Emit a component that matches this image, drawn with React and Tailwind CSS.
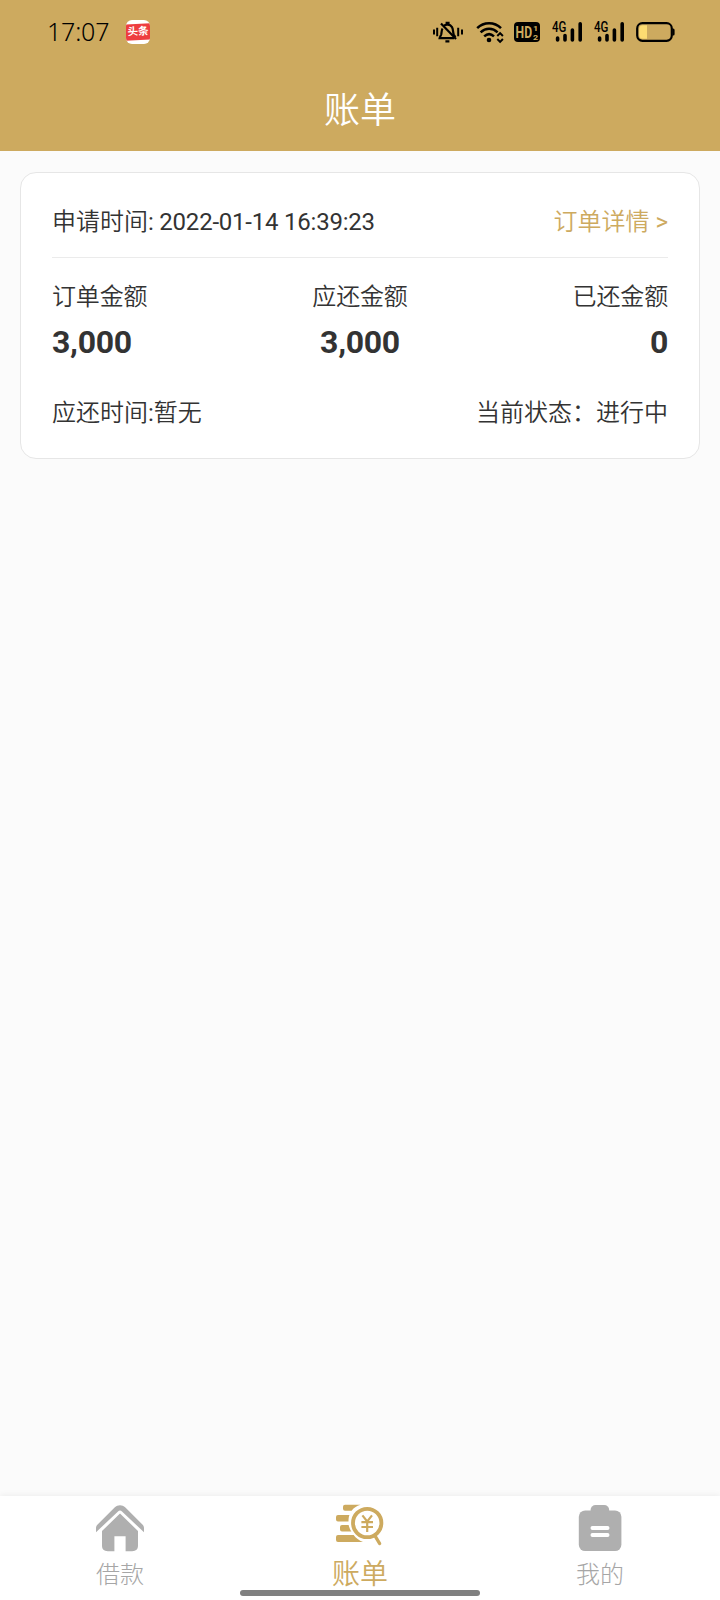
import React from 'react';

const BellOffIcon = () => (
  <svg width="32" height="24" viewBox="0 0 32 24" fill="none" stroke="#000" strokeWidth="2.2" strokeLinecap="butt">
    <path d="M10.5 8.5C9.5 10 9.6 13 9.2 14.5C8.8 15.8 7.8 16.6 7.6 18.2H22" />
    <path d="M11.5 6.4C13.4 4 18 4 20 7.2C21.4 9.4 20.8 12.6 21.8 14.8L23.4 17.2" />
    <path d="M9 3.6L24 19" />
    <path d="M13.6 2.8H17.6M13.4 21.4H17.4" strokeWidth="2.2" />
    <path d="M2 9.4V14.6M5.2 7.8V16.2M26.2 7.8V16.2M30 9.4V14.6" strokeWidth="2" />
  </svg>
);

const WifiIcon = () => (
  <svg width="28" height="24" viewBox="0 0 28 24" fill="none" stroke="#000" strokeWidth="2.5">
    <path d="M1.2 8.2C7.8 1.6 18.4 1.6 25 8.2" />
    <path d="M4.6 12.4C9.6 7.6 16.6 7.6 21.6 12.4" />
    <path d="M8.2 16.4C11.2 13.6 15 13.6 18 16.4" />
    <circle cx="13" cy="20" r="2.3" fill="#000" stroke="none" />
    <path d="M21.3 16L24.1 13.1L26.9 16M21.3 19L24.1 21.9L26.9 19" strokeWidth="2" />
  </svg>
);

const HdIcon = () => (
  <svg width="26" height="20" viewBox="0 0 26 20">
    <rect width="26" height="20" rx="4" fill="#000" />
    <g fill="#cdaa5f" fontFamily="Roboto, sans-serif" fontWeight="bold">
      <text transform="translate(1.6 15.8) scale(.76 1)" fontSize="16">HD</text>
      <text transform="translate(19 8.8) scale(1.2 1)" fontSize="7.5">1</text>
      <text transform="translate(19 18) scale(1.2 1)" fontSize="7.5">2</text>
    </g>
  </svg>
);

const SignalIcon = () => (
  <svg width="31" height="30" viewBox="0 -4 31 30">
    <text transform="translate(0 11.2) scale(.82 1)" fontSize="14" fontWeight="500" fontFamily="Roboto, sans-serif">4G</text>
    <g stroke="#000" strokeWidth="3.6" strokeLinecap="round">
      <path d="M5.6 17V19M13 14.6V19M20.4 9V19M28.2 2.8V19" />
    </g>
  </svg>
);

const BatteryIcon = () => (
  <svg width="39" height="20" viewBox="0 0 39 20">
    <rect x="1.2" y="1.2" width="34.6" height="17.6" rx="5.2" fill="none" stroke="#000" strokeWidth="2.2" />
    <path d="M11 3.2V16.8H7C4.4 16.8 3.2 15.4 3.2 13V7C3.2 4.6 4.4 3.2 7 3.2Z" fill="#fddc72" />
    <path d="M36.6 6.5H37.2Q38.6 6.5 38.6 8V12Q38.6 13.5 37.2 13.5H36.6Z" />
  </svg>
);

const HomeIcon = () => (
  <svg width="48" height="48" viewBox="0 0 48 48" fill="#afafaf">
    <path d="M0 23.2C0 21.6 .5 20.6 1.6 19.5L18.6 2.6C22 -.6 26 -.6 29.4 2.6L46.4 19.5C47.5 20.6 48 21.6 48 23.2V27.3L26 6.4Q24 4.6 22 6.4L0 27.3Z" />
    <path d="M24 8.6L42 26V40.6C42 44.4 40 46.2 36.2 46.2H29.6V31.2H18.4V46.2H11.8C8 46.2 6 44.4 6 40.6V26Z" />
  </svg>
);

const BillIcon = () => (
  <svg width="48" height="44" viewBox="0 0 48 44" fill="#cdaa5f" className="-mt-px">
    <path d="M9 .8H24.5C20.5 2 17.5 4 15.6 6.8H9Q7 6.8 7 4.8V2.8Q7 .8 9 .8Z" />
    <path d="M2 11H13.4C12.7 13 12.5 15 12.5 17.4H2Q0 17.4 0 15.4V13Q0 11 2 11Z" />
    <path d="M6 21H12.6C13.2 23.6 14.2 25.8 15.4 27.6H6Q4 27.6 4 25.6V23Q4 21 6 21Z" />
    <path d="M2 31H17.6C20 34 23 36.6 27 38H2Q0 38 0 36V33Q0 31 2 31Z" />
    <circle cx="31.2" cy="19" r="14.2" fill="none" stroke="#cdaa5f" strokeWidth="3.8" />
    <path d="M38.8 31.5L43.6 39.5" stroke="#cdaa5f" strokeWidth="3.4" strokeLinecap="round" />
    <path d="M26.4 11.4L31.2 17.4L36 11.4M31.2 17.4V28M25.4 18.2H37M25.4 23H37" fill="none" stroke="#cdaa5f" strokeWidth="2.2" />
  </svg>
);

const MineIcon = () => (
  <svg width="44" height="48" viewBox="0 0 44 48" fill="#afafaf">
    <rect x="12.6" y="0" width="18.6" height="12" rx="5" />
    <rect x="0.8" y="5.4" width="42.6" height="40.6" rx="6.4" />
    <path d="M14.4 23H29.6M14.4 30H29.6" stroke="#fff" strokeWidth="3.8" strokeLinecap="round" />
  </svg>
);

const StatusBar = () => (
  <div className="flex h-16 items-center pl-[47px] pr-[45px]">
    <span className="w-[79px] pb-0.5 font-['Noto_Sans'] text-[25px] font-light leading-none tracking-[-0.2px] text-black">17:07</span>
    <div className="flex h-6 w-6 flex-col justify-center overflow-hidden rounded-md bg-white">
      <div className="-mx-0.5 -rotate-3 bg-[#ee3d40] text-center text-[10.5px] font-bold leading-4 whitespace-nowrap text-white">头条</div>
    </div>
    <div className="ml-auto flex items-center">
      <BellOffIcon />
      <span className="ml-3"><WifiIcon /></span>
      <span className="ml-2.5"><HdIcon /></span>
      <span className="ml-3"><SignalIcon /></span>
      <span className="ml-[11px]"><SignalIcon /></span>
      <span className="ml-[11px]"><BatteryIcon /></span>
    </div>
  </div>
);

const Amount = ({ label, value, className }) => (
  <div className={`flex flex-col ${className}`}>
    <span className="text-2xl leading-9 tracking-[-0.15px]">{label}</span>
    <span className="mt-[7px] font-[Roboto] text-[32px] font-bold leading-10 tracking-[-0.3px]">{value}</span>
  </div>
);

const OrderCard = () => (
  <div className="mx-5 mt-[21px] h-[287px] rounded-2xl border border-[#e6e6e6] bg-white px-[31px] text-[#333]">
    <div className="flex h-[85px] items-center justify-between border-b border-[#ebebeb] pt-3.5 text-2xl leading-9">
      <span>申请时间<span className="font-normal tracking-[-0.22px]">: 2022-01-14 16:39:23</span></span>
      <a href="#" className="text-[#cdaa5f]">订单详情<span className="font-normal"> &gt;</span></a>
    </div>
    <div className="flex justify-between pt-[21px]">
      <Amount label="订单金额" value="3,000" className="items-start" />
      <Amount label="应还金额" value="3,000" className="items-center" />
      <Amount label="已还金额" value="0" className="items-end" />
    </div>
    <div className="mt-[33px] flex justify-between text-2xl leading-9">
      <span>应还时间<span className="font-normal">:</span>暂无</span>
      <span>当前状态：进行中</span>
    </div>
  </div>
);

const tabs = [
  { label: '借款', icon: <HomeIcon />, active: false },
  { label: '账单', icon: <BillIcon />, active: true },
  { label: '我的', icon: <MineIcon />, active: false },
];

const TabBar = () => (
  <nav className="relative flex h-[104px] bg-white shadow-[0_-1px_6px_rgba(0,0,0,0.06)]">
    {tabs.map((tab) => (
      <a key={tab.label} href="#" className="flex flex-1 flex-col items-center pt-[9px]">
        <div className="flex h-[50px] items-start">{tab.icon}</div>
        <span className={`leading-10 ${tab.active ? 'text-[28px] text-[#cdaa5f]' : 'text-2xl font-light text-[#a6a6a6]'}`}>{tab.label}</span>
      </a>
    ))}
    <div className="absolute bottom-1 left-1/2 h-1.5 w-60 -translate-x-1/2 rounded-full bg-[#808080]" />
  </nav>
);

const App = () => {
  return (
    <div className="flex h-[1600px] w-[720px] flex-col overflow-hidden bg-[#fbfbfb] font-[Roboto,'Noto_Sans_CJK_SC',sans-serif] font-[350]">
      <header className="h-[151px] bg-[#cdaa5f]">
        <StatusBar />
        <h1 className="text-center text-4xl leading-[95px] text-white">账单</h1>
      </header>
      <main className="flex-1">
        <OrderCard />
      </main>
      <TabBar />
    </div>
  );
};

export default App;
